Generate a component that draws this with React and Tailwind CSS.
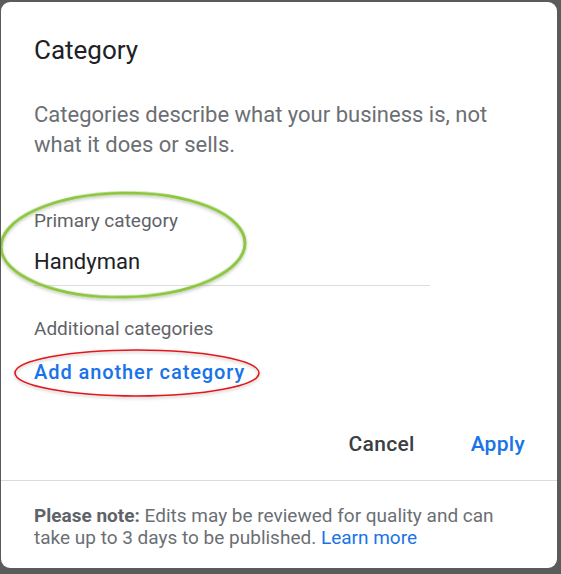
import React from 'react';

export default function App() {
  const medium = "font-['Roboto_Medium','Roboto','Liberation_Sans',sans-serif] font-medium";
  return (
    <div className="w-[561px] h-[574px] bg-[#5b5b5b] pt-[2px] pl-[1px] pr-[4px] pb-[6px] font-['Roboto','Liberation_Sans',sans-serif]">
      <div className="relative h-full bg-white rounded-[9px] overflow-hidden flex flex-col">
        <div className="pl-[33px] pr-[30px] pt-[33px]">
          <h2 className="text-[26px] leading-[30px] text-[#202124]">Category</h2>
          <p className="mt-[35px] text-[22px] leading-[30px] text-[#6b6f74]">
            Categories describe what your business is, not what it does or sells.
          </p>

          <div className="mt-[50px] w-[396px]">
            <div className="text-[19px] leading-[22px] text-[#5f6368]">Primary category</div>
            <div className="mt-[17px] pb-[10px] text-[22px] leading-[26px] text-[#202124] border-b border-[#dadce0]">Handyman</div>
          </div>

          <div className="mt-[32px] text-[19px] leading-[22px] text-[#5f6368]">Additional categories</div>
          <button className={`mt-[20px] block text-[20px] leading-[24px] tracking-[0.9px] text-[#1a73e8] ${medium}`}>
            Add another category
          </button>

          <div className="mt-[48px] flex justify-end gap-[56px] pr-[2px]">
            <button className={`text-[21px] leading-[24px] tracking-[0.3px] text-[#3c4043] ${medium}`}>Cancel</button>
            <button className={`text-[21px] leading-[24px] tracking-[0.3px] text-[#1a73e8] ${medium}`}>Apply</button>
          </div>
        </div>

        <div className="mt-[24px] border-t border-[#dadce0] pl-[33px] pr-[30px] pt-[24px] text-[19px] leading-[22px] text-[#6b6f74]">
          <span className="font-bold text-[#5f6368]">Please note:</span> Edits may be reviewed for quality and can take up to 3 days to be published.{' '}
          <a className="text-[#1a73e8]">Learn more</a>
        </div>

        <svg className="absolute left-[-1px] top-[-2px] pointer-events-none" width="561" height="574" viewBox="0 0 561 574">
          <defs>
            <filter id="sh" x="-10%" y="-10%" width="120%" height="130%">
              <feDropShadow dx="0" dy="1.5" stdDeviation="1.5" floodColor="#000" floodOpacity="0.25" />
            </filter>
          </defs>
          <ellipse cx="123" cy="245" rx="122" ry="52" fill="none" stroke="#8cc63f" strokeWidth="3" filter="url(#sh)" transform="rotate(-1 123 245)" />
          <ellipse cx="137" cy="373" rx="122" ry="23" fill="none" stroke="#e3161b" strokeWidth="1.6" filter="url(#sh)" />
        </svg>
      </div>
    </div>
  );
}
